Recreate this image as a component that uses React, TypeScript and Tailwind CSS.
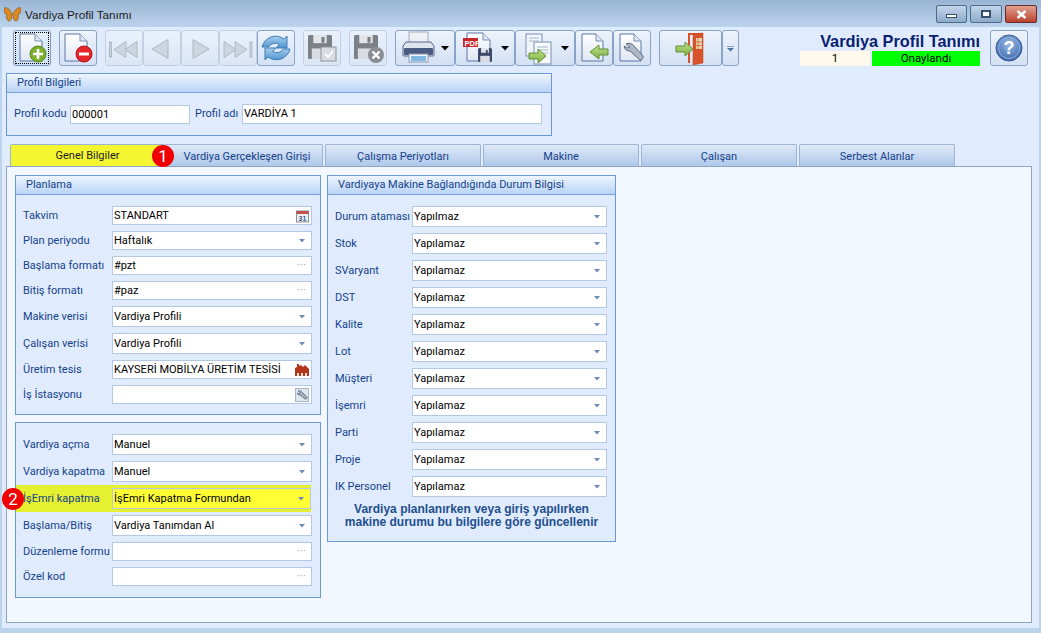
import type { ReactNode } from 'react';

const navy = 'text-[#15428b]';

function ToolButton({ w, active, off, children }: { w: string; active?: boolean; off?: boolean; children: ReactNode }) {
  const tone = off
    ? 'border-[#c3d0e2] from-[#e9f1fc] to-[#dbe6f5]'
    : active
    ? 'border-[#7f9bc4] from-[#e4eefb] to-[#cfe0f5]'
    : 'border-[#8aa3c8] from-[#edf3fc] to-[#d3e1f4]';
  return <div className={`${w} h-[36px] shrink-0 rounded-[3px] border bg-gradient-to-b ${tone} relative`}>{children}</div>;
}

function Doc({ x = 7, y = 3, w = 22, h = 27 }: { x?: number; y?: number; w?: number; h?: number }) {
  const f = 7;
  return (
    <>
      <path d={`M${x} ${y}h${w - f}l${f} ${f}v${h - f}h-${w}z`} fill="url(#docFill)" stroke="#5d74a6" strokeWidth="1" />
      <path d={`M${x + w - f} ${y}v${f}h${f}`} fill="#dfe6f2" stroke="#7a8fb6" strokeWidth="1" />
    </>
  );
}

function Floppy({ x, y, s = 24, gray = true }: { x: number; y: number; s?: number; gray?: boolean }) {
  const main = gray ? '#7b7f86' : '#3c4a6b';
  return (
    <>
      <rect x={x} y={y} width={s} height={s} rx="1.5" fill={main} />
      <rect x={x + s * 0.22} y={y} width={s * 0.56} height={s * 0.34} fill="#e2e4e8" />
      <rect x={x + s * 0.56} y={y + 2} width={s * 0.13} height={s * 0.24} fill={main} />
      <rect x={x + s * 0.16} y={y + s * 0.56} width={s * 0.68} height={s * 0.44} fill="#d8dce2" />
    </>
  );
}

function GreenArrow({ d }: { d: string }) {
  return <path d={d} fill="url(#greenFill)" stroke="#5f9234" strokeWidth="1" strokeLinejoin="round" />;
}

function Svg({ w, children }: { w: number; children: ReactNode }) {
  return (
    <svg className="absolute left-0 top-0" width={w} height={34} viewBox={`0 0 ${w} 34`}>
      {children}
    </svg>
  );
}

function Caret({ x }: { x: number }) {
  return <path d={`M${x} 15h8l-4 4.500z`} fill="#000" />;
}

function Toolbar() {
  const tri = { fill: '#cdd5de', stroke: '#aeb9c6' };
  return (
    <div className="flex h-[36px] pl-[7px]">
      <ToolButton w="w-[38px]" active>
        <Svg w={36}>
          <Doc x={6} y={3} />
          <circle cx="24" cy="23" r="8" fill="#7cb02f" stroke="#55851f" />
          <path d="M24 18v10M19 23h10" stroke="#fff" strokeWidth="2.6" />
        </Svg>
        <div className="absolute inset-[1px] border border-dotted border-black" />
      </ToolButton>
      <div className="w-[8px]" />
      <ToolButton w="w-[38px]">
        <Svg w={36}>
          <Doc x={5} y={3} />
          <circle cx="24" cy="23" r="8" fill="#e5252a" stroke="#b81419" />
          <rect x="19" y="21.5" width="10" height="3" fill="#fff" />
        </Svg>
      </ToolButton>
      <div className="w-[8px]" />
      <ToolButton w="w-[38px]" off>
        <Svg w={36}>
          <rect x="3.5" y="11" width="2" height="15" {...tri} />
          <path d="M8 18.500l12-8v16z" {...tri} />
          <path d="M19 18.500l12-8v16z" {...tri} />
        </Svg>
      </ToolButton>
      <ToolButton w="w-[38px]" off>
        <Svg w={36}>
          <path d="M8 18l16-9.500v19z" {...tri} />
        </Svg>
      </ToolButton>
      <ToolButton w="w-[38px]" off>
        <Svg w={36}>
          <path d="M11 8.500l16 9.500-16 9.500z" {...tri} />
        </Svg>
      </ToolButton>
      <ToolButton w="w-[38px]" off>
        <Svg w={36}>
          <path d="M4 10.500l12 8-12 8z" {...tri} />
          <path d="M15 10.500l12 8-12 8z" {...tri} />
          <rect x="30" y="11" width="2" height="15" {...tri} />
        </Svg>
      </ToolButton>
      <ToolButton w="w-[38px]">
        <Svg w={36}>
          <path d="M4 16a14 14 0 0 1 22-8l3-3v12h-11l3.500-3.500a8 8 0 0 0-11 2.500z" fill="url(#blueFill)" stroke="#3f7db8" strokeLinejoin="round" />
          <path d="M32 18a14 14 0 0 1-22 8l-3 3v-12h11l-3.500 3.500a8 8 0 0 0 11-2.500z" fill="url(#blueFill)" stroke="#3f7db8" strokeLinejoin="round" />
        </Svg>
      </ToolButton>
      <div className="w-[8px]" />
      <ToolButton w="w-[38px]" off>
        <Svg w={36}>
          <Floppy x={4} y={4} />
          <rect x="17" y="16" width="15" height="14" fill="#d9dde3" stroke="#8f959d" />
          <path d="M21 23l3 3 5-6" fill="none" stroke="#fff" strokeWidth="1.6" />
        </Svg>
      </ToolButton>
      <div className="w-[8px]" />
      <ToolButton w="w-[38px]" off>
        <Svg w={36}>
          <Floppy x={4} y={4} />
          <circle cx="26" cy="24" r="8" fill="#8a8e94" />
          <path d="M22.500 20.500l7 7M29.500 20.500l-7 7" stroke="#fff" strokeWidth="2.4" />
        </Svg>
      </ToolButton>
      <div className="w-[8px]" />
      <ToolButton w="w-[60px]">
        <Svg w={58}>
          <rect x="13" y="1" width="19" height="11" fill="#eef0f5" stroke="#a3abbd" />
          <path d="M10 11h25l3 4v9a1 1 0 0 1-1 1h-29a1 1 0 0 1-1-1v-9z" fill="#dfe5f0" stroke="#55658a" />
          <rect x="8" y="17" width="29" height="7" rx="1" fill="#4a5a80" />
          <rect x="13" y="23" width="19" height="8" fill="#f2f5fb" stroke="#8a98b4" />
          <rect x="15" y="25" width="15" height="5" fill="#7fb8e4" />
          <Caret x={45} />
        </Svg>
      </ToolButton>
      <ToolButton w="w-[60px]">
        <Svg w={58}>
          <Doc x={11} y={2} w={23} h={28} />
          <rect x="7" y="7" width="15" height="9" fill="#c8242b" />
          <text x="8.500" y="14.500" fontSize="7.500" fontWeight="700" fill="#fff" fontFamily="Liberation Sans, sans-serif">PDF</text>
          <Floppy x={22} y={17} s={14} gray={false} />
          <Caret x={45} />
        </Svg>
      </ToolButton>
      <ToolButton w="w-[60px]">
        <Svg w={58}>
          <rect x="10" y="3" width="16" height="22" fill="#f2f5fb" stroke="#7a8fb6" />
          <rect x="18" y="11" width="17" height="22" fill="#f6f8fc" stroke="#7a8fb6" />
          <path d="M21 16h11M21 19h11M21 22h11M13 7h10M13 10h10" stroke="#aab6cc" />
          <GreenArrow d="M13 22h9v-4l8 7-8 7v-4h-9z" />
          <Caret x={45} />
        </Svg>
      </ToolButton>
      <ToolButton w="w-[38px]">
        <Svg w={36}>
          <Doc x={6} y={3} w={21} h={27} />
          <GreenArrow d="M32 18h-9v-4l-9 7 9 7v-4h9z" />
        </Svg>
      </ToolButton>
      <ToolButton w="w-[38px]">
        <Svg w={36}>
          <Doc x={6} y={3} w={21} h={27} />
          <path d="M12 13a6 6 0 0 1 8 2l9 10a3 3 0 0 1-3 4l-10-9a6 6 0 0 1-6-5l4 2 2-1z" fill="#aeb8c6" stroke="#5f6b7e" strokeLinejoin="round" />
        </Svg>
      </ToolButton>
      <div className="w-[8px]" />
      <ToolButton w="w-[63px]">
        <Svg w={61}>
          <path d="M28 2h15v2h-13v28h-2z" fill="#d9532a" />
          <path d="M33 3l10-1v30l-10 2z" fill="#d9532a" stroke="#bf4119" strokeWidth=".5" />
          <rect x="36" y="7" width="6" height="11" fill="#e9d8a8" />
          <path d="M38 7v11M36 11h6M36 14.500h6" stroke="#d9532a" strokeWidth=".7" />
          <GreenArrow d="M16 15h9v-4l8 7-8 7v-4h-9z" />
        </Svg>
      </ToolButton>
      <ToolButton w="w-[17px]">
        <Svg w={15}>
          <path d="M4 17h7l-3.500 3.500z" fill="#4f73a8" />
          <rect x="4" y="15" width="7" height="1" fill="#8aa3c8" />
        </Svg>
      </ToolButton>
      <div className="ml-auto flex pr-[4px]">
        <div className="flex flex-col items-end pr-[10px]">
          <div className="mt-[1px] h-[20px] font-['Liberation_Sans',sans-serif] text-[16.300px] font-bold leading-[20px] text-[#0a1f70]">Vardiya Profil Tanımı</div>
          <div className="flex gap-[2px] text-[11.500px] leading-[15px] text-black">
            <div className="h-[15px] w-[70px] bg-[#fff9ec] text-center">1</div>
            <div className="h-[15px] w-[108px] bg-[#00ff00] text-center">Onaylandı</div>
          </div>
        </div>
        <ToolButton w="w-[38px]">
          <Svg w={36}>
            <circle cx="18" cy="17" r="13" fill="url(#helpFill)" stroke="#3b5c9c" />
            <circle cx="18" cy="17" r="10.500" fill="none" stroke="#8fb1dc" />
            <text x="18" y="23" fontSize="18" fontWeight="700" fill="#fff" textAnchor="middle" fontFamily="Liberation Sans, sans-serif">?</text>
          </Svg>
        </ToolButton>
      </div>
    </div>
  );
}

function GroupHeader({ children }: { children: ReactNode }) {
  return (
    <div className={`flex h-[19px] items-center border-b border-[#7aa3d8] bg-gradient-to-b from-[#eef5fe] to-[#b9d4f6] pl-[10px] pt-[1px] ${navy} text-[11px]`}>
      {children}
    </div>
  );
}

function Adornment({ kind }: { kind: string }) {
  if (kind === 'combo')
    return (
      <svg width="6" height="6" viewBox="0 0 6 6" className="mr-[6px] shrink-0">
        <path d="M0 1h6L3 4.500z" fill="#6d8bb5" />
      </svg>
    );
  if (kind === 'dots') return <span className="mr-[5px] shrink-0 text-[10px] tracking-[0.5px] text-[#8a9ab0]">···</span>;
  if (kind === 'date')
    return (
      <svg width="13" height="14" viewBox="0 0 13 14" className="mr-[2px] shrink-0">
        <rect x=".5" y="2" width="12" height="11" fill="#eef0f3" stroke="#8b8f96" />
        <rect x=".5" y="2" width="12" height="3" fill="#c0504d" />
        <text x="6.500" y="11.500" fontSize="7" fontWeight="700" textAnchor="middle" fill="#3a5a8a" fontFamily="Liberation Sans, sans-serif">31</text>
      </svg>
    );
  if (kind === 'plant')
    return (
      <svg width="14" height="13" viewBox="0 0 14 13" className="mr-[2px] shrink-0">
        <path d="M0 13V5l2-1V1h2v2l2-1 2 2 2-2 4 4v7z" fill="#b5341c" />
        <rect x="2" y="10" width="2" height="3" fill="#e8e0d0" />
        <rect x="6" y="10" width="2" height="3" fill="#e8e0d0" />
        <rect x="10" y="10" width="2" height="3" fill="#e8e0d0" />
      </svg>
    );
  return (
    <svg width="14" height="14" viewBox="0 0 14 14" className="mr-[2px] shrink-0">
      <rect x=".5" y=".5" width="13" height="13" fill="#dfe6f0" stroke="#a9b5c6" />
      <path d="M3 3a3 3 0 0 1 4 1l5 5a1.500 1.500 0 0 1-2 2L5 7a3 3 0 0 1-3-2l2 1 1-1z" fill="#a3aebd" stroke="#556070" strokeWidth=".7" />
    </svg>
  );
}

function Row({ label, value, kind, labelW = 'w-[89px]', short, mark }: {
  label: string;
  value?: string;
  kind: string;
  labelW?: string;
  short?: boolean;
  mark?: boolean;
}) {
  const isCombo = kind === 'combo';
  return (
    <div className={`flex items-center ${mark ? '-my-[3px] -ml-[7px] mr-[1px] bg-[#e4f030] py-[3px] pl-[7px]' : ''}`}>
      <div className={`${labelW} shrink-0 whitespace-nowrap pt-[1px] text-[11px] ${navy}`}>{label}</div>
      <div
        className={`flex flex-1 items-center justify-between border border-[#b4c8e4] pl-[1px] text-[11px] text-black ${isCombo && !short ? 'h-[21px]' : 'h-[19px]'} ${
          mark ? 'bg-[#ffff33]' : 'bg-white'
        }`}
      >
        <span className="whitespace-nowrap pt-[1px]">{value}</span>
        <Adornment kind={kind} />
      </div>
    </div>
  );
}

const durumRows = ['Stok', 'SVaryant', 'DST', 'Kalite', 'Lot', 'Müşteri', 'İşemri', 'Parti', 'Proje', 'IK Personel'];
const tabs = ['Vardiya Gerçekleşen Girişi', 'Çalışma Periyotları', 'Makine', 'Çalışan', 'Serbest Alanlar'];

function Badge({ n, className }: { n: string; className: string }) {
  return (
    <div className={`absolute flex h-[22px] w-[22px] items-center justify-center rounded-full bg-[#f00000] text-[17px] leading-none text-white ${className}`}>
      {n}
    </div>
  );
}

export default function App() {
  return (
    <div className="relative flex h-[633px] w-[1041px] flex-col overflow-hidden bg-[#bcd4ec] font-['Roboto',sans-serif]">
      <svg width="0" height="0" className="absolute">
        <defs>
          <linearGradient id="docFill" x1="0" y1="0" x2="0" y2="1">
            <stop offset="0" stopColor="#ffffff" />
            <stop offset="1" stopColor="#dfe6f3" />
          </linearGradient>
          <linearGradient id="greenFill" x1="0" y1="0" x2="0" y2="1">
            <stop offset="0" stopColor="#c4e08c" />
            <stop offset="1" stopColor="#78b040" />
          </linearGradient>
          <linearGradient id="blueFill" x1="0" y1="0" x2="0" y2="1">
            <stop offset="0" stopColor="#a9d0ee" />
            <stop offset="1" stopColor="#4f93cf" />
          </linearGradient>
          <radialGradient id="helpFill" cx=".5" cy=".35" r=".7">
            <stop offset="0" stopColor="#9cbbe6" />
            <stop offset="1" stopColor="#2f5ea8" />
          </radialGradient>
        </defs>
      </svg>

      {/* Title bar */}
      <div className="flex h-[27px] shrink-0 items-center bg-gradient-to-b from-[#9ab5d3] to-[#bcd3ec] pl-[4px]">
        <svg width="17" height="15" viewBox="0 0 17 15" className="mt-[2px]">
          <path d="M8 7C6 2 3 0 0 1c0 4 1 6 3 7-1 2 0 6 2 6s3-3 3-7z" fill="#e08a1e" stroke="#6b4a1a" strokeWidth=".6" />
          <path d="M9 7c2-5 5-7 8-6 0 4-1 6-3 7 1 2 0 6-2 6s-3-3-3-7z" fill="#e08a1e" stroke="#6b4a1a" strokeWidth=".6" />
        </svg>
        <div className="ml-[4px] mt-[2px] font-['Liberation_Sans',sans-serif] text-[11.700px] text-[#1a1a1a]">Vardiya Profil Tanımı</div>
        <div className="ml-auto mr-[4px] mt-[1px] flex gap-[3px]">
          <div className="flex h-[18px] w-[31px] items-center justify-center rounded-[2px] border border-[#4d6a8c] bg-gradient-to-b from-[#c3d6ea] to-[#8eabca]">
            <div className="mt-[3px] h-[4px] w-[11px] border border-[#3c4f68] bg-white" />
          </div>
          <div className="flex h-[18px] w-[32px] items-center justify-center rounded-[2px] border border-[#4d6a8c] bg-gradient-to-b from-[#c3d6ea] to-[#8eabca]">
            <div className="h-[8px] w-[10px] border-2 border-[#3c4f68] bg-white" />
          </div>
          <div className="flex h-[18px] w-[32px] items-center justify-center rounded-[2px] border border-[#6b2a2a] bg-gradient-to-b from-[#e0a090] to-[#b8402c]">
            <svg width="11" height="9" viewBox="0 0 11 9">
              <path d="M1.500 1l8 7M9.500 1l-8 7" stroke="#fff" strokeWidth="2.4" />
            </svg>
          </div>
        </div>
      </div>

      {/* Window body */}
      <div className="mx-[2px] flex h-[601px] shrink-0 flex-col bg-[#e0ecfd] pl-[4px] pr-[7px] pt-[3px]">
        <Toolbar />

        {/* Profil Bilgileri */}
        <div className="mt-[7px] h-[63px] w-[546px] shrink-0 border border-[#6b9ad2]">
          <GroupHeader>Profil Bilgileri</GroupHeader>
          <div className="flex items-center pl-[7px] pt-[11px] text-[11px]">
            <span className={`w-[56px] shrink-0 whitespace-nowrap ${navy}`}>Profil kodu</span>
            <div className="h-[19px] w-[120px] shrink-0 border border-[#b4c8e4] bg-white pl-[1px] leading-[17px] text-black">000001</div>
            <span className={`ml-[5px] w-[47px] shrink-0 whitespace-nowrap ${navy}`}>Profil adı</span>
            <div className="h-[20px] w-[300px] shrink-0 border border-[#b4c8e4] bg-white pl-[1px] leading-[18px] text-black">VARDİYA 1</div>
          </div>
        </div>

        {/* Tabs */}
        <div className="mt-[8px] flex h-[22px] shrink-0 pl-[4px] text-[11px]">
          <div className="flex h-[23px] w-[155px] items-center justify-center rounded-t-[2px] border border-b-0 border-[#9db4d2] bg-[#f4f630] pt-[1px] text-[#222]">Genel Bilgiler</div>
          {tabs.map((t, i) => (
            <div
              key={t}
              className={`flex items-center justify-center rounded-t-[2px] border border-b-0 border-[#9db4d2] bg-gradient-to-b from-[#dfe9f7] to-[#aec8ea] pt-[3px] ${navy} ${
                i === 0 ? 'w-[158px] pl-[6px]' : 'ml-[2px] w-[156px]'
              }`}
            >
              {t}
            </div>
          ))}
        </div>

        {/* Page */}
        <div className="flex h-[457px] shrink-0 gap-[6px] border border-[#8ea6c4] bg-[#f3f7ff] pl-[8px] pt-[8px]">
          <div className="flex w-[306px] flex-col gap-[7px]">
            <div className="h-[240px] border border-[#6b9ad2] bg-[#e0ecfd]">
              <GroupHeader>Planlama</GroupHeader>
              <div className="flex flex-col gap-[6px] pl-[7px] pr-[8px] pt-[11px]">
                <Row label="Takvim" value="STANDART" kind="date" />
                <Row label="Plan periyodu" value="Haftalık" kind="combo" short />
                <Row label="Başlama formatı" value="#pzt" kind="dots" />
                <Row label="Bitiş formatı" value="#paz" kind="dots" />
                <Row label="Makine verisi" value="Vardiya Profili" kind="combo" />
                <Row label="Çalışan verisi" value="Vardiya Profili" kind="combo" />
                <Row label="Üretim tesis" value="KAYSERİ MOBİLYA ÜRETİM TESİSİ" kind="plant" />
                <Row label="İş İstasyonu" kind="tool" />
              </div>
            </div>
            <div className="h-[176px] border border-[#6b9ad2] bg-[#e0ecfd]">
              <div className="flex flex-col gap-[6px] pl-[7px] pr-[8px] pt-[11px]">
                <Row label="Vardiya açma" value="Manuel" kind="combo" />
                <Row label="Vardiya kapatma" value="Manuel" kind="combo" />
                <Row label="İşEmri kapatma" value="İşEmri Kapatma Formundan" kind="combo" mark />
                <Row label="Başlama/Bitiş" value="Vardiya Tanımdan Al" kind="combo" />
                <Row label="Düzenleme formu" kind="dots" />
                <Row label="Özel kod" kind="dots" />
              </div>
            </div>
          </div>

          <div className="h-[367px] w-[289px] border border-[#6b9ad2] bg-[#e0ecfd]">
            <GroupHeader>Vardiyaya Makine Bağlandığında Durum Bilgisi</GroupHeader>
            <div className="flex flex-col gap-[6px] pl-[7px] pr-[8px] pt-[11px]">
              <Row label="Durum ataması" value="Yapılmaz" kind="combo" labelW="w-[77px]" />
              {durumRows.map((r) => (
                <Row key={r} label={r} value="Yapılamaz" kind="combo" labelW="w-[77px]" />
              ))}
            </div>
            <div className="mt-[6px] text-center font-['Liberation_Sans',sans-serif] text-[12px] font-bold leading-[13px] text-[#1f4f8f]">
              Vardiya planlanırken veya giriş yapılırken
              <br />
              makine durumu bu bilgilere göre güncellenir
            </div>
          </div>
        </div>
      </div>

      <Badge n="1" className="left-[152px] top-[145px]" />
      <Badge n="2" className="left-[2px] top-[488px]" />
    </div>
  );
}
